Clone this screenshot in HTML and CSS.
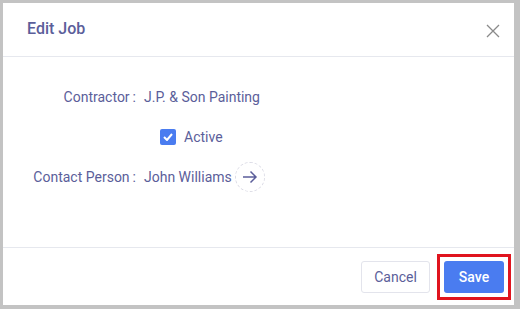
FILE: index.html
```html
<!DOCTYPE html>
<html lang="en">

<head>
    <meta charset="UTF-8">
    <meta name="viewport" content="width=device-width, initial-scale=1.0">
    <title>Edit Job</title>
    <link rel="stylesheet" href="styles.css">
</head>

<body>
    <div class="dialog">
        <div class="dialog-header">
            <span class="dialog-title">Edit Job</span>
            <button type="button" class="close-btn" aria-label="Close">
                <svg width="14" height="14" viewBox="0 0 14 14">
                    <path d="M1 1 L13 13 M13 1 L1 13" stroke="#8a8a8a" stroke-width="1.3" fill="none" />
                </svg>
            </button>
        </div>

        <div class="dialog-body">
            <div class="form-row">
                <label class="form-label">Contractor<span class="colon">:</span></label>
                <div class="form-value">J.P. &amp; Son Painting</div>
            </div>
            <div class="form-row">
                <div class="form-label"></div>
                <div class="form-value">
                    <label class="check">
                        <span class="check-box">
                            <svg width="10" height="8" viewBox="0 0 10 8">
                                <path d="M1 4 L4 7 L9 1" stroke="#fff" stroke-width="2" fill="none" />
                            </svg>
                        </span>
                        Active
                    </label>
                </div>
            </div>
            <div class="form-row">
                <label class="form-label">Contact Person<span class="colon">:</span></label>
                <div class="form-value">
                    John Williams
                    <span class="go-btn">
                        <svg width="16" height="14" viewBox="0 0 16 14">
                            <path d="M1 7 H14 M8.5 1.5 L14 7 L8.5 12.5" stroke="#5b5e9a" stroke-width="1.5" fill="none" />
                        </svg>
                    </span>
                </div>
            </div>
        </div>

        <div class="dialog-footer">
            <button type="button" class="btn btn-cancel">Cancel</button>
            <span class="highlight">
                <button type="button" class="btn btn-save">Save</button>
            </span>
        </div>
    </div>
</body>

</html>
```

FILE: styles.css
```css
body {
    margin: 0;
    background-color: #c3c3c3;
    font-family: Roboto, "Liberation Sans", sans-serif;
    color: #5b5e9a;
}

.dialog {
    margin: 3px 6px 4px 3px;
    height: 302px;
    background-color: #fff;
    display: flex;
    flex-direction: column;
}

.dialog-header {
    height: 53px;
    display: flex;
    align-items: center;
    justify-content: space-between;
    padding: 0 14px 0 24px;
    border-bottom: 1px solid #e6e8ee;
}

.dialog-title {
    font-size: 16px;
    font-weight: 500;
    margin-top: -2px;
}

.close-btn {
    background: none;
    border: none;
    padding: 0;
    display: flex;
    margin-top: 2px;
}

.dialog-body {
    flex: 1;
    padding-top: 20px;
}

.form-row {
    display: flex;
    align-items: center;
    height: 40px;
}

.form-label {
    width: 133px;
    text-align: right;
    font-size: 14px;
    flex-shrink: 0;
}

.colon {
    margin-left: 3px;
}

.form-value {
    margin-left: 8px;
    font-size: 14px;
    display: flex;
    align-items: center;
}

.check {
    display: flex;
    align-items: center;
    gap: 8px;
    margin-left: 16px;
}

.check-box {
    width: 16px;
    height: 16px;
    border-radius: 2px;
    background-color: #4a7cf0;
    display: flex;
    align-items: center;
    justify-content: center;
}

.go-btn {
    width: 30px;
    height: 30px;
    box-sizing: border-box;
    border: 1px dashed #dcdce6;
    border-radius: 50%;
    display: flex;
    align-items: center;
    justify-content: center;
    margin-left: 3px;
}

.dialog-footer {
    height: 57px;
    border-top: 1px solid #e6e8ee;
    display: flex;
    align-items: center;
    justify-content: flex-end;
    gap: 7px;
    padding: 0 3px 0 0;
}

.btn {
    height: 32px;
    border-radius: 3px;
    font-family: Roboto, "Liberation Sans", sans-serif;
    font-size: 14px;
    cursor: pointer;
}

.btn-cancel {
    width: 69px;
    background-color: #fff;
    border: 1px solid #e3e4ec;
    color: #5b5e9a;
}

.highlight {
    display: flex;
    padding: 4px;
    border: 3px solid #e0141e;
}

.btn-save {
    width: 60px;
    background-color: #4a7cf0;
    border: none;
    color: #fff;
    font-weight: 500;
}
```
